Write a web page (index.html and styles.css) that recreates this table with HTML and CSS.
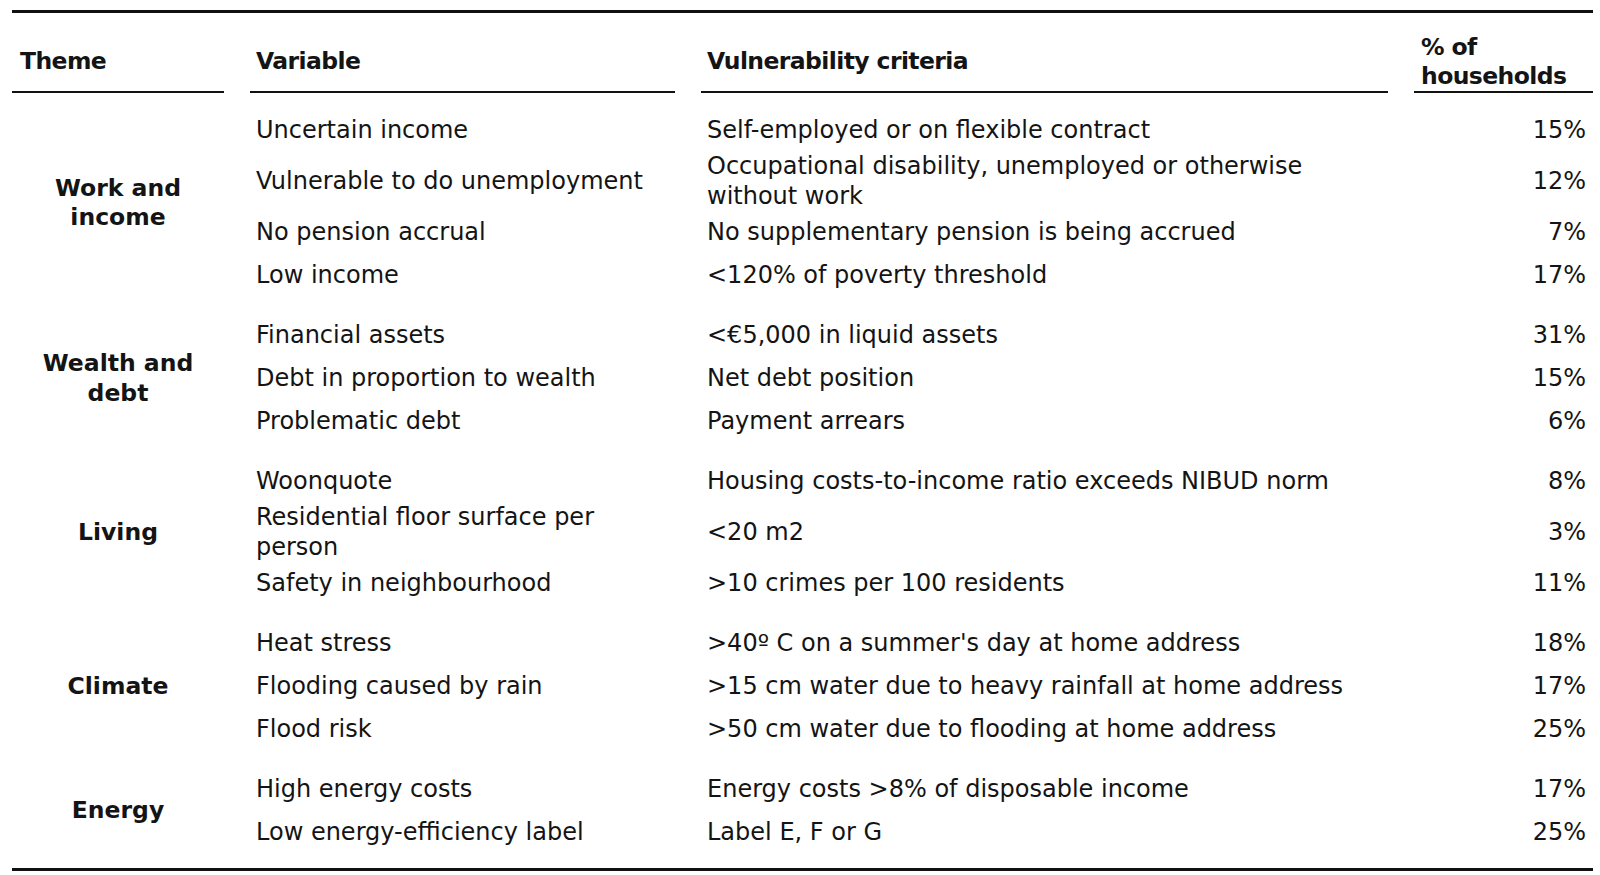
FILE: index.html
```html
<!DOCTYPE html>
<html>
<head>
<meta charset="utf-8">
<link rel="stylesheet" href="styles.css">
</head>
<body>
<div class="table">
  <div class="head">
    <div class="hcell">Theme</div>
    <div class="hcell">Variable</div>
    <div class="hcell">Vulnerability criteria</div>
    <div class="hcell">% of<br>households</div>
  </div>

  <div class="group first">
    <div class="theme">Work and<br>income</div>
    <div class="rows">
      <div class="row"><div>Uncertain income</div><div>Self-employed or on flexible contract</div><div class="pct">15%</div></div>
      <div class="row"><div>Vulnerable to do unemployment</div><div>Occupational disability, unemployed or otherwise without work</div><div class="pct">12%</div></div>
      <div class="row"><div>No pension accrual</div><div>No supplementary pension is being accrued</div><div class="pct">7%</div></div>
      <div class="row"><div>Low income</div><div>&lt;120% of poverty threshold</div><div class="pct">17%</div></div>
    </div>
  </div>

  <div class="group">
    <div class="theme">Wealth and<br>debt</div>
    <div class="rows">
      <div class="row"><div>Financial assets</div><div>&lt;€5,000 in liquid assets</div><div class="pct">31%</div></div>
      <div class="row"><div>Debt in proportion to wealth</div><div>Net debt position</div><div class="pct">15%</div></div>
      <div class="row"><div>Problematic debt</div><div>Payment arrears</div><div class="pct">6%</div></div>
    </div>
  </div>

  <div class="group">
    <div class="theme">Living</div>
    <div class="rows">
      <div class="row"><div>Woonquote</div><div>Housing costs-to-income ratio exceeds NIBUD norm</div><div class="pct">8%</div></div>
      <div class="row"><div>Residential floor surface per person</div><div>&lt;20 m2</div><div class="pct">3%</div></div>
      <div class="row"><div>Safety in neighbourhood</div><div>&gt;10 crimes per 100 residents</div><div class="pct">11%</div></div>
    </div>
  </div>

  <div class="group">
    <div class="theme">Climate</div>
    <div class="rows">
      <div class="row"><div>Heat stress</div><div>&gt;40º C on a summer's day at home address</div><div class="pct">18%</div></div>
      <div class="row"><div>Flooding caused by rain</div><div>&gt;15 cm water due to heavy rainfall at home address</div><div class="pct">17%</div></div>
      <div class="row"><div>Flood risk</div><div>&gt;50 cm water due to flooding at home address</div><div class="pct">25%</div></div>
    </div>
  </div>

  <div class="group">
    <div class="theme">Energy</div>
    <div class="rows">
      <div class="row"><div>High energy costs</div><div>Energy costs &gt;8% of disposable income</div><div class="pct">17%</div></div>
      <div class="row"><div>Low energy-efficiency label</div><div>Label E, F or G</div><div class="pct">25%</div></div>
    </div>
  </div>
</div>
</body>
</html>
```

FILE: styles.css
```css
html, body {
  margin: 0;
  padding: 0;
  background: #ffffff;
}

body {
  font-family: "DejaVu Sans", Verdana, sans-serif;
  font-size: 24px;
  color: #141414;
}

.table {
  width: 1581px;
  margin: 10px 0 0 12px;
  border-top: 3px solid #111;
  border-bottom: 3px solid #111;
  padding-bottom: 14px;
}

.head {
  display: grid;
  grid-template-columns: 212px 425px 687px 179px;
  column-gap: 26px;
}

.hcell {
  font-weight: bold;
  font-size: 23.5px;
  letter-spacing: -0.6px;
  line-height: 28.5px;
  padding: 20px 6px 1px 6px;
  border-bottom: 2px solid #111;
  display: flex;
  align-items: center;
  min-height: 57px;
}

.hcell:first-child {
  padding-left: 8px;
}

.hcell:last-child {
  padding-left: 7px;
}

.group {
  display: grid;
  grid-template-columns: 212px 1343px;
  column-gap: 26px;
  margin-top: 17px;
}

.group.first {
  margin-top: 16px;
}

.theme {
  font-weight: bold;
  font-size: 23.5px;
  text-align: center;
  line-height: 29.5px;
  display: flex;
  align-items: center;
  justify-content: center;
}

.rows {
  display: flex;
  flex-direction: column;
}

.row {
  display: grid;
  grid-template-columns: 425px 687px 179px;
  column-gap: 26px;
  min-height: 43px;
  align-items: center;
  line-height: 29.5px;
}

.row > div {
  padding: 0 6px;
}

.row > .pct {
  text-align: right;
  padding-right: 7px;
}
```
